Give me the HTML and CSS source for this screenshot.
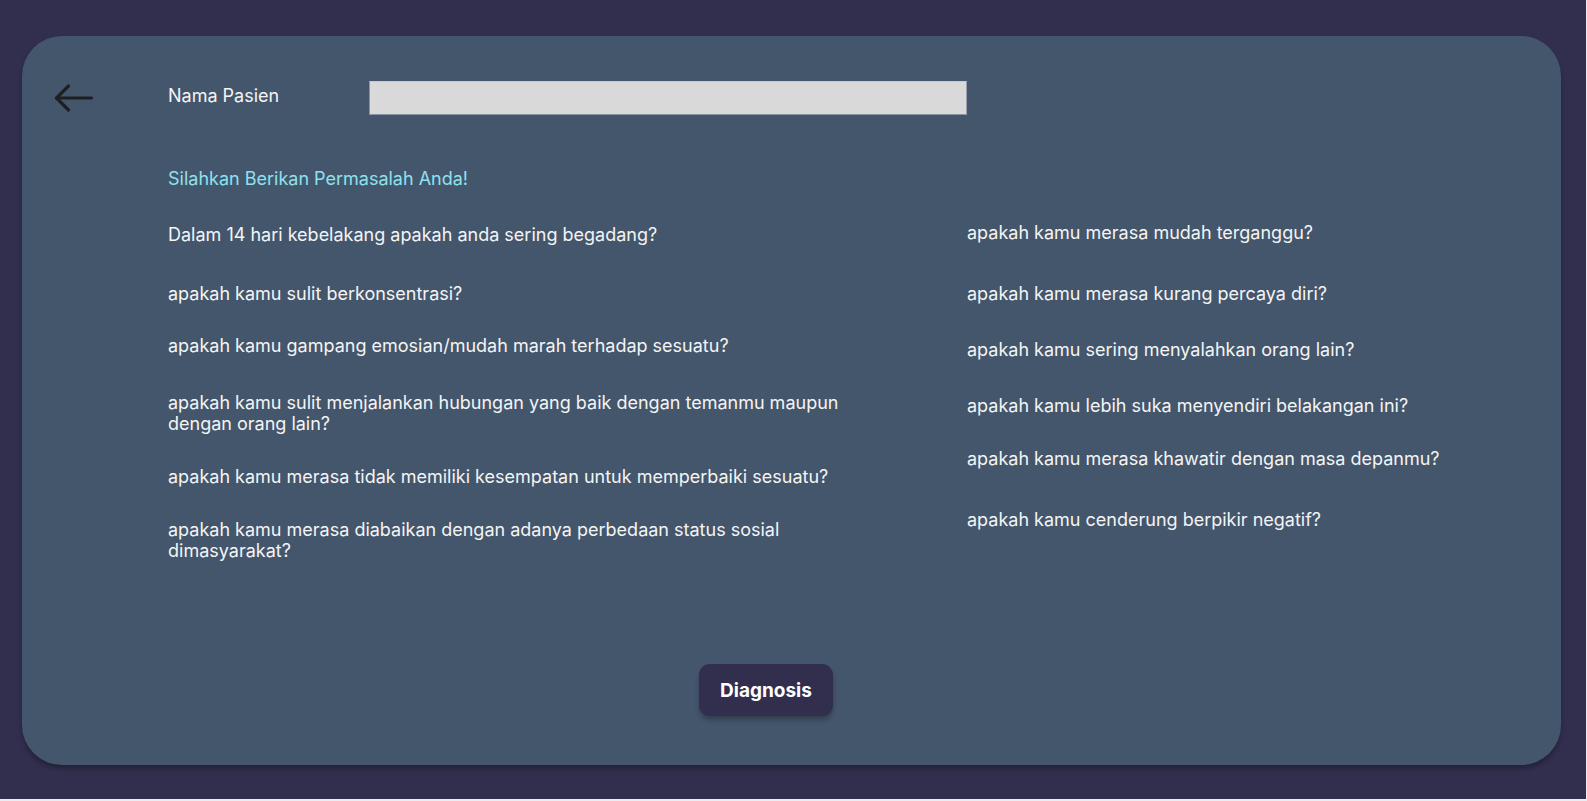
FILE: index.html
```html
<!DOCTYPE html>
<html lang="id">
<head>
<meta charset="utf-8">
<title>Diagnosis</title>
<link rel="stylesheet" href="styles.css">
</head>
<body>
<div class="page">
  <main class="card">
    <div class="header">
      <button class="back" aria-label="Kembali">
        <svg width="40" height="30" viewBox="0 0 40 30" fill="none" stroke="#1f1f1f" stroke-width="3.2" stroke-linecap="round" stroke-linejoin="round">
          <path d="M2.5 15 H37.5"/>
          <path d="M14.5 3 L2.5 15 L14.5 27"/>
        </svg>
      </button>
      <label class="label" for="nama">Nama Pasien</label>
      <input id="nama" class="input" type="text">
    </div>

    <p class="title">Silahkan Berikan Permasalah Anda!</p>

    <div class="questions">
      <div class="col col-left">
        <p class="q">Dalam 14 hari kebelakang apakah anda sering begadang?</p>
        <p class="q m38">apakah kamu sulit berkonsentrasi?</p>
        <p class="q m31">apakah kamu gampang emosian/mudah marah terhadap sesuatu?</p>
        <p class="q m36">apakah kamu sulit menjalankan hubungan yang baik dengan temanmu maupun dengan orang lain?</p>
        <p class="q m32">apakah kamu merasa tidak memiliki kesempatan untuk memperbaiki sesuatu?</p>
        <p class="q m32">apakah kamu merasa diabaikan dengan adanya perbedaan status sosial dimasyarakat?</p>
      </div>
      <div class="col col-right">
        <p class="q">apakah kamu merasa mudah terganggu?</p>
        <p class="q m40">apakah kamu merasa kurang percaya diri?</p>
        <p class="q m35">apakah kamu sering menyalahkan orang lain?</p>
        <p class="q m35">apakah kamu lebih suka menyendiri belakangan ini?</p>
        <p class="q m32">apakah kamu merasa khawatir dengan masa depanmu?</p>
        <p class="q m40">apakah kamu cenderung berpikir negatif?</p>
      </div>
    </div>

    <div class="actions">
      <button class="diagnose">Diagnosis</button>
    </div>
  </main>
</div>
</body>
</html>
```

FILE: styles.css
```css
html {
  background: #ececec;
}
body {
  margin: 0;
  font-family: "Inter", "Noto Sans", sans-serif;
}
.page {
  width: 1586px;
  height: 799px;
  box-sizing: border-box;
  background: #312f4d;
  padding: 36px 25px 0 22px;
}
.card {
  height: 729px;
  box-sizing: border-box;
  background: #44566c;
  border-radius: 40px;
  box-shadow: 0 4px 4px rgba(0, 0, 0, 0.25);
  padding: 45px 0 49px 0;
  display: flex;
  flex-direction: column;
}
.header {
  display: flex;
  align-items: center;
  height: 34px;
}
.back {
  margin-left: 32px;
  width: 40px;
  height: 30px;
  padding: 0;
  border: 0;
  background: transparent;
  display: flex;
  cursor: pointer;
}
.label {
  margin-left: 74px;
  width: 201px;
  font-size: 18px;
  color: #f4f4f4;
  line-height: 21px;
  position: relative;
  top: -3px;
}
.input {
  width: 598px;
  height: 34px;
  box-sizing: border-box;
  margin: 0;
  padding: 0;
  background: #d9d9d9;
  border: 1px solid #8a94a2;
  border-top-color: #c6c9cf;
  border-right-color: #9aa1ab;
  outline: none;
}
.title {
  margin: 53px 0 0 146px;
  font-size: 18px;
  line-height: 21px;
  color: #8fe0ee;
}
.questions {
  margin-top: 33px;
  display: grid;
  grid-template-columns: 799px 1fr;
  padding-left: 146px;
}
.col {
  display: flex;
  flex-direction: column;
}
.col-left {
  padding-top: 2px;
}
.q {
  margin: 0;
  max-width: 700px;
  font-size: 18px;
  line-height: 21px;
  color: #f4f4f4;
}
.m31 { margin-top: 31px; }
.m32 { margin-top: 32px; }
.m35 { margin-top: 35px; }
.m36 { margin-top: 36px; }
.m38 { margin-top: 38px; }
.m40 { margin-top: 40px; }
.actions {
  margin-top: auto;
  margin-left: 146px;
  width: 1196px;
  display: flex;
  justify-content: center;
}
.diagnose {
  width: 134px;
  height: 52px;
  border: 0;
  border-radius: 11px;
  background: #312f4d;
  color: #ffffff;
  font-family: "Inter", "Noto Sans", sans-serif;
  font-weight: 700;
  font-size: 19px;
  box-shadow: 0 4px 4px rgba(0, 0, 0, 0.25);
  cursor: pointer;
}
```
